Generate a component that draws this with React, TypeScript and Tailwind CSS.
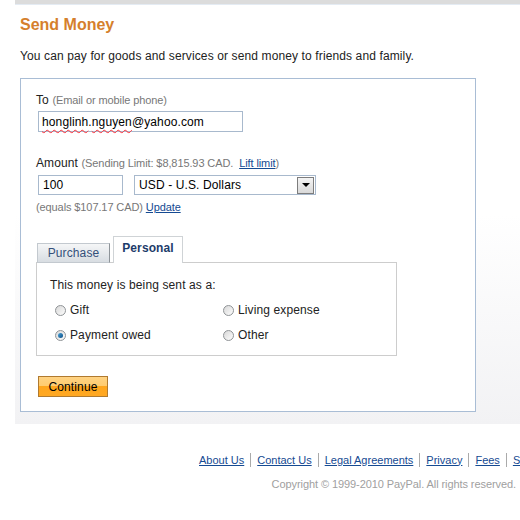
import React from 'react';

const linkCls = 'text-[#154a92] underline';

function Radio({ checked }: { checked?: boolean }) {
  return (
    <span className="flex h-[11px] w-[11px] items-center justify-center rounded-full border border-[#8f9396] bg-gradient-to-br from-[#d8d8d8] to-[#fdfdfd]">
      {checked && <span className="h-[5px] w-[5px] rounded-full bg-gradient-to-br from-[#4aa3d8] to-[#0b4f86]" />}
    </span>
  );
}

function Option({ label, checked }: { label: string; checked?: boolean }) {
  return (
    <label className="flex items-center gap-[4px] h-[14px]">
      <Radio checked={checked} />
      <span>{label}</span>
    </label>
  );
}

const footerLinks = ['About Us', 'Contact Us', 'Legal Agreements', 'Privacy', 'Fees', 'Site Feedback'];

export default function App() {
  return (
    <div className="w-[520px] h-[520px] overflow-hidden bg-white text-[12px] leading-[14px] tracking-[0.12px] text-[#222] font-['Liberation_Sans',Arial,sans-serif]">
      {/* page panel */}
      <div className="ml-[15px] h-[424px] border-t-4 border-[#dcdcdc] bg-gradient-to-b from-white via-white to-[#f2f2f4]">
        <div className="h-px bg-[#e4ebf3]" />
        <div className="pl-[5px]">
          <h1 className="mt-[11px] text-[16px] leading-[18px] font-bold tracking-normal text-[#d57f2c]">Send Money</h1>
          <p className="mt-[14px] leading-[16px] text-[#222]">
            You can pay for goods and services or send money to friends and family.
          </p>

          <div className="mt-[14px] w-[456px] h-[334px] border border-[#a9bdd5] bg-white pl-[15px] pt-[14px]">
            <div>
              To <span className="text-[11px] tracking-[-0.1px] text-[#777]">(Email or mobile phone)</span>
            </div>
            <div className="mt-[4px] ml-[2px] flex h-[21px] w-[205px] items-center border border-[#a8b9cd] pl-[3px] text-black">
              <span className="underline decoration-wavy decoration-red-500 decoration-1 underline-offset-[3px]">honglinh</span>.
              <span className="underline decoration-wavy decoration-red-500 decoration-1 underline-offset-[3px]">nguyen</span>@yahoo.com
            </div>

            <div className="mt-[24px]">
              Amount{' '}
              <span className="text-[11px] tracking-[-0.1px] text-[#777]">
                (Sending Limit: $8,815.93 CAD.&nbsp; <span className={linkCls}>Lift limit</span>)
              </span>
            </div>
            <div className="mt-[5px] ml-[2px] flex gap-[11px]">
              <div className="flex h-[20px] w-[85px] items-center border border-[#a8b9cd] pl-[4px] text-black">100</div>
              <div className="flex h-[20px] w-[182px] items-center justify-between border border-[#a8b9cd] pl-[4px] pr-px text-black">
                <span>USD - U.S. Dollars</span>
                <span className="flex h-[17px] w-[17px] items-center justify-center border border-[#7d7d7d] bg-gradient-to-b from-[#f4f4f4] to-[#d9d9d9]">
                  <span className="h-0 w-0 border-x-[4px] border-t-[4px] border-x-transparent border-t-black" />
                </span>
              </div>
            </div>
            <div className="mt-[6px] text-[11px] leading-[13px] tracking-[-0.1px] text-[#777]">
              (equals $107.17 CAD) <span className={linkCls}>Update</span>
            </div>

            {/* tabs */}
            <div className="mt-[23px] flex h-[26px] items-end pl-px">
              <div className="flex h-[20px] w-[73px] items-center justify-center border border-[#c3c9cf] border-r-[#8e9499] bg-gradient-to-b from-[#f5f6f7] to-[#d8dde2] text-[#34507a]">
                Purchase
              </div>
              <div className="relative z-10 ml-[3px] flex h-[27px] w-[70px] items-start justify-center border border-b-0 border-[#cfd3d6] bg-white pt-[4px] font-bold text-[#1d3c6a]">
                Personal
              </div>
            </div>
            <div className="-mt-px w-[361px] h-[94px] border border-[#cdcdcd] pl-[13px] pt-[15px]">
              <div className="text-[#222]">This money is being sent as a:</div>
              <div className="mt-[11px] ml-[5px] grid grid-cols-[168px_1fr] gap-y-[11px]">
                <Option label="Gift" />
                <Option label="Living expense" />
                <Option label="Payment owed" checked />
                <Option label="Other" />
              </div>
            </div>

            <button className="mt-[20px] ml-[2px] flex h-[21px] w-[70px] items-center justify-center border border-[#b07a2f] bg-[linear-gradient(#ffd383_0%,#ffcc70_45%,#ffa61d_50%,#ffa823_100%)] text-black">
              Continue
            </button>
          </div>
        </div>
      </div>

      {/* footer */}
      <div className="mt-[29px] flex items-center pl-[199px] whitespace-nowrap text-[11px] leading-[13px] tracking-normal">
        {footerLinks.map((l, i) => (
          <React.Fragment key={l}>
            {i > 0 && <span className="mx-[6px] h-[14px] border-l border-[#aaa]" />}
            <span className={linkCls}>{l}</span>
          </React.Fragment>
        ))}
      </div>
      <div className="mt-[11px] pr-[4px] text-right text-[11px] leading-[13px] tracking-[-0.08px] text-[#a0a0a0]">
        Copyright © 1999-2010 PayPal. All rights reserved.
      </div>
    </div>
  );
}
